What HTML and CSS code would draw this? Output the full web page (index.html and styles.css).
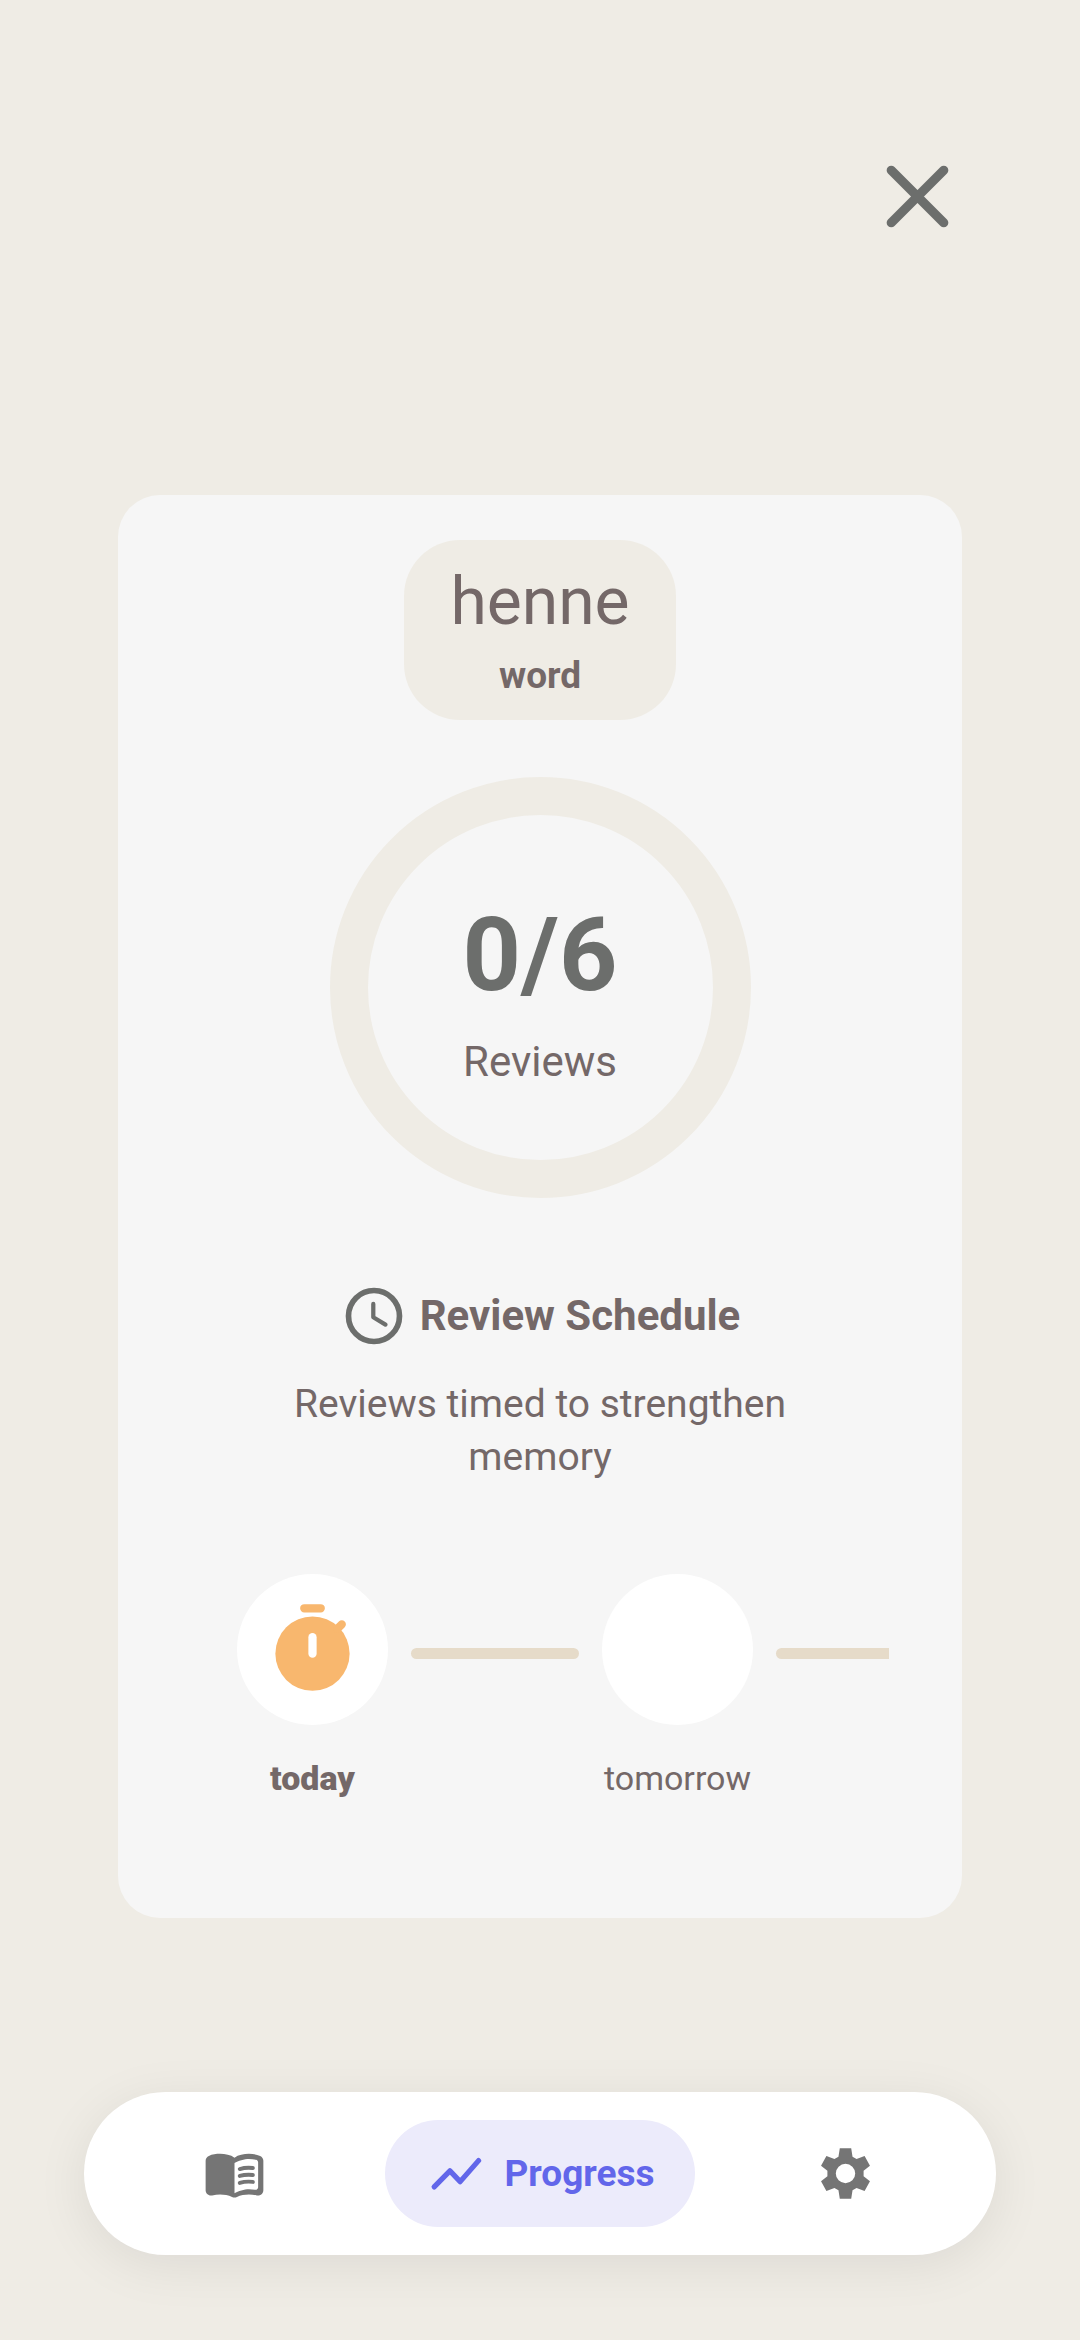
FILE: index.html
```html
<!DOCTYPE html>
<html lang="en">

<head>
    <meta charset="UTF-8">
    <meta name="viewport" content="width=device-width, initial-scale=1.0">
    <title>Progress</title>
    <link rel="stylesheet" href="styles.css">
</head>

<body>
    <header class="top-bar">
        <button class="close-btn" type="button">
            <svg viewBox="0 0 24 24">
                <path d="M6 6l12 12M18 6L6 18" fill="none" stroke="currentColor" stroke-width="2.1" stroke-linecap="round" />
            </svg>
        </button>
    </header>

    <main class="card">
        <div class="word-chip">
            <h1>henne</h1>
            <p>word</p>
        </div>

        <div class="progress-ring">
            <strong>0/6</strong>
            <span>Reviews</span>
        </div>

        <h2 class="schedule-title">
            <svg viewBox="0 0 24 24">
                <circle cx="12" cy="12" r="9" fill="none" stroke="currentColor" stroke-width="2" />
                <path d="M11.75 7.75v4.7l4.3 2.6" fill="none" stroke="currentColor" stroke-width="1.5" stroke-linecap="round" stroke-linejoin="round" />
            </svg>
            Review Schedule
        </h2>
        <p class="schedule-text">Reviews timed to strengthen memory</p>

        <!-- Review steps, cut off at the right edge -->
        <ol class="timeline">
            <li class="step active">
                <div class="dot">
                    <svg viewBox="0 0 24 24">
                        <circle cx="12" cy="13" r="9" fill="currentColor" />
                        <path d="M10 2h4M18 7l1.1-1.1" fill="none" stroke="currentColor" stroke-width="2" stroke-linecap="round" />
                        <path d="M12 9v4" fill="none" stroke="#fff" stroke-width="2" stroke-linecap="round" />
                    </svg>
                </div>
                <span>today</span>
            </li>
            <li class="connector"></li>
            <li class="step">
                <div class="dot"></div>
                <span>tomorrow</span>
            </li>
            <li class="connector"></li>
        </ol>
    </main>

    <nav class="bottom-nav">
        <button class="nav-btn" type="button">
            <svg viewBox="0 0 24 24">
                <path fill="currentColor" d="M17.5 4.5c-1.95 0-4.05.4-5.5 1.5-1.45-1.1-3.55-1.5-5.5-1.5-1.45 0-2.99.22-4.28.79C1.49 5.62 1 6.33 1 7.14v11.28c0 1.3 1.22 2.26 2.48 1.94.98-.25 2.02-.36 3.02-.36 1.56 0 3.22.26 4.56.92.6.3 1.28.3 1.87 0 1.34-.67 3-.92 4.56-.92 1 0 2.04.11 3.02.36 1.26.33 2.48-.63 2.48-1.94V7.14c0-.81-.49-1.52-1.22-1.85-1.28-.57-2.82-.79-4.27-.79zM21 17.23c0 .63-.58 1.09-1.2.98-.75-.14-1.53-.2-2.3-.2-1.7 0-4.15.65-5.5 1.5V8c1.35-.85 3.8-1.5 5.5-1.5.92 0 1.83.09 2.7.28.46.1.8.51.8.98v9.47z" />
                <path d="M14 10.3c1.6-.5 3.4-.6 5-.4M14 12.95c1.6-.5 3.4-.6 5-.4M14 15.6c1.6-.5 3.4-.6 5-.4" fill="none" stroke="currentColor" stroke-width="1.5" stroke-linecap="round" />
            </svg>
        </button>
        <button class="nav-btn selected" type="button">
            <svg viewBox="0 0 24 24">
                <path d="M3.5 17.1l6-6.1 3.9 4.1 7-8" fill="none" stroke="currentColor" stroke-width="2" stroke-linecap="round" stroke-linejoin="round" />
            </svg>
            Progress
        </button>
        <button class="nav-btn" type="button">
            <svg viewBox="-94 -94 188 188">
                <path fill="currentColor" fill-rule="evenodd" d="M-17-75h34l4 25 12 7 24-9 16 29-19 15v16l19 15-16 29-24-9-12 7-4 25h-34l-4-25-12-7-24 9-16-29 19-15V-8l-19-15 16-29 24 9 12-7zM0-29a29 29 0 1 0 0 58 29 29 0 1 0 0-58z" />
            </svg>
        </button>
    </nav>
</body>

</html>
```
FILE: styles.css
```css
* {
    box-sizing: border-box;
}

body {
    font-family: Roboto, sans-serif;
    margin: 0;
    min-height: 100vh;
    display: flex;
    flex-direction: column;
    background-color: #efece5;
    color: #746868;
}

h1,
h2,
p,
ol {
    margin: 0;
    padding: 0;
}

button {
    font-family: inherit;
    border: none;
    background: none;
    padding: 0;
    cursor: pointer;
}

svg {
    display: block;
    flex: none;
}

.top-bar {
    display: flex;
    justify-content: flex-end;
    padding: 144px 110px 0;
}

.close-btn {
    color: #6c6e6c;
}

.close-btn svg {
    width: 105px;
    height: 105px;
}

.card {
    display: flex;
    flex-direction: column;
    align-items: center;
    margin: 246px 118px 0;
    padding: 45px 73px 118px;
    border-radius: 42px;
    background-color: #f6f6f6;
}

.word-chip {
    padding: 20px 46px 18px;
    border-radius: 56px;
    background-color: #efece5;
    text-align: center;
}

.word-chip h1 {
    font-size: 66px;
    font-weight: 400;
    line-height: 84px;
}

.word-chip p {
    margin-top: 6px;
    font-size: 37px;
    font-weight: 700;
    line-height: 52px;
}

.progress-ring {
    display: flex;
    flex-direction: column;
    align-items: center;
    justify-content: center;
    gap: 12px;
    width: 421px;
    height: 421px;
    margin-top: 57px;
    border: 38px solid #efece5;
    border-radius: 50%;
}

.progress-ring strong {
    font-size: 102px;
    line-height: 136px;
    color: #6c6e6c;
}

.progress-ring span {
    font-size: 42px;
    line-height: 54px;
}

.schedule-title {
    display: flex;
    align-items: center;
    gap: 12px;
    margin-top: 84px;
    font-size: 42px;
    font-weight: 700;
    line-height: 68px;
}

.schedule-title svg {
    width: 68px;
    height: 68px;
    color: #6c6e6c;
}

.schedule-text {
    max-width: 600px;
    margin-top: 28px;
    font-size: 39px;
    line-height: 53px;
    text-align: center;
}

.timeline {
    align-self: stretch;
    display: flex;
    gap: 23px;
    margin-top: 90px;
    padding-left: 46px;
    overflow: hidden;
    list-style: none;
}

.step {
    flex: none;
    display: flex;
    flex-direction: column;
    align-items: center;
    gap: 31px;
    width: 151px;
    font-size: 34px;
    line-height: 44px;
}

.step.active {
    font-weight: 900;
}

.dot {
    display: flex;
    align-items: center;
    justify-content: center;
    width: 151px;
    height: 151px;
    border-radius: 50%;
    background-color: #fff;
    color: #f8b76e;
}

.dot svg {
    width: 99px;
    height: 99px;
}

.connector {
    flex: none;
    width: 168px;
    height: 11px;
    margin-top: 74px;
    border-radius: 6px;
    background-color: #e6dbc9;
}

.bottom-nav {
    display: grid;
    grid-template-columns: 1fr auto 1fr;
    align-items: center;
    justify-items: center;
    margin: auto 84px 85px;
    padding: 28px 0;
    border-radius: 82px;
    background-color: #fff;
    box-shadow: 0 10px 52px rgba(0, 0, 0, 0.08);
}

.nav-btn {
    display: flex;
    align-items: center;
    gap: 16px;
    padding: 22px 40px;
    border-radius: 54px;
    font-size: 37px;
    font-weight: 700;
    color: #757575;
}

.nav-btn svg {
    width: 63px;
    height: 63px;
}

.nav-btn.selected {
    background-color: #ecebfb;
    color: #6266ea;
}
```
